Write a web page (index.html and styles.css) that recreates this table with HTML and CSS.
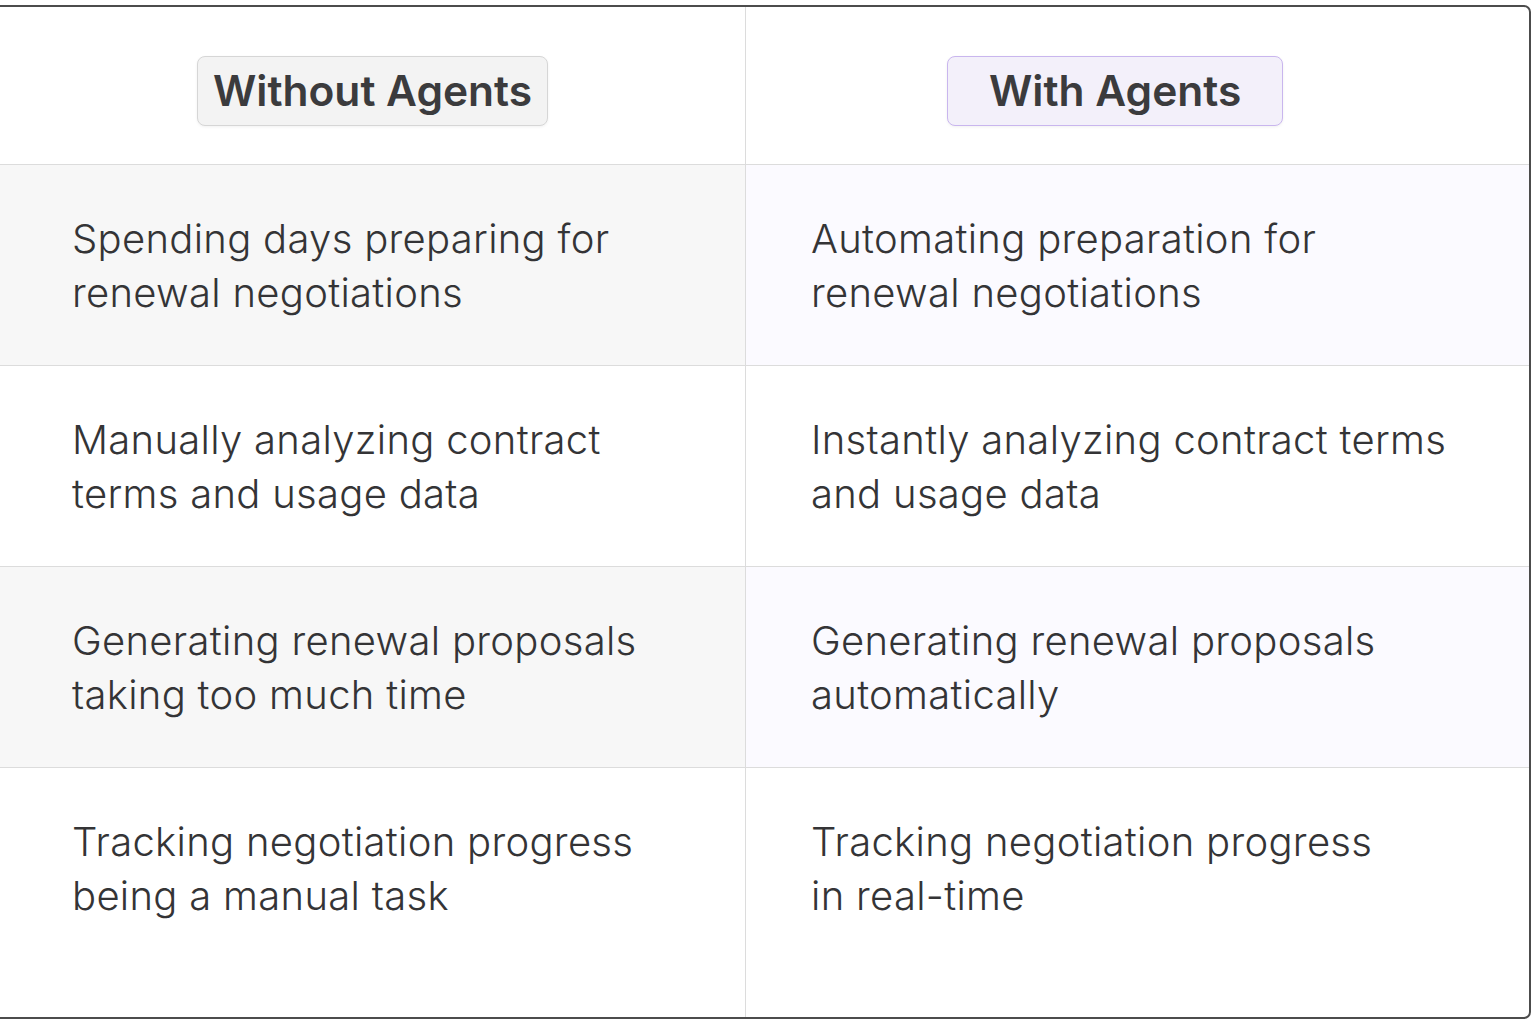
FILE: index.html
```html
<!DOCTYPE html>
<html lang="en">
<head>
<meta charset="utf-8">
<title>Without Agents vs With Agents</title>
<link rel="stylesheet" href="styles.css">
</head>
<body>
<div class="compare">
  <div class="cell head left-col"><span class="badge badge-plain">Without Agents</span></div>
  <div class="cell head right-col"><span class="badge badge-purple">With Agents</span></div>

  <div class="cell row shade-grey left-col"><p>Spending days preparing for<br>renewal negotiations</p></div>
  <div class="cell row shade-lilac right-col"><p>Automating preparation for<br>renewal negotiations</p></div>

  <div class="cell row left-col"><p>Manually analyzing contract<br>terms and usage data</p></div>
  <div class="cell row right-col"><p>Instantly analyzing contract terms<br>and usage data</p></div>

  <div class="cell row shade-grey left-col"><p>Generating renewal proposals<br>taking too much time</p></div>
  <div class="cell row shade-lilac right-col"><p>Generating renewal proposals<br>automatically</p></div>

  <div class="cell row last left-col"><p>Tracking negotiation progress<br>being a manual task</p></div>
  <div class="cell row last right-col"><p>Tracking negotiation progress<br>in real-time</p></div>
</div>
</body>
</html>
```
FILE: styles.css
```css
* { box-sizing: border-box; }
html, body { margin: 0; padding: 0; background: #ffffff; }
body { overflow: hidden; width: 1536px; height: 1024px; }

.compare {
  margin-top: 5px;
  margin-left: -10px;
  width: 1541px;
  display: grid;
  grid-template-columns: 753px 784px;
  grid-template-rows: 158px 201px 201px 201px 249px;
  border: 2px solid #4c4c4c;
  border-radius: 0 7px 7px 0;
  overflow: hidden;
  font-family: Inter, "Noto Sans", sans-serif;
  color: #3a3a3c;
}

.cell { border-bottom: 1px solid #dcdcdc; }
.cell.last { border-bottom: none; }
.right-col { border-left: 1px solid #dcdcdc; }

.head {
  display: flex;
  align-items: flex-start;
  padding-top: 49px;
}
.head.left-col { justify-content: center; padding-left: 8px; }
.head.right-col { justify-content: flex-start; padding-left: 201px; }

.badge {
  display: inline-block;
  font-size: 42.5px;
  font-weight: 600;
  line-height: 67px;
  height: 70px;
  border-radius: 8px;
  color: #3b3b3d;
  box-shadow: 0 1px 3px rgba(0,0,0,0.06);
}
.badge-plain {
  background: #f3f3f3;
  border: 1.5px solid #d6d6d6;
  padding: 0 15px;
}
.badge-purple {
  background: #f3f0fa;
  border: 1.5px solid #c9b6ee;
  padding: 0 41px 0 41px;
}

.row p {
  margin: 0;
  font-size: 40px;
  font-weight: 300;
  line-height: 54px;
  letter-spacing: 0.3px;
  color: #343436;
}
.row.left-col { padding: 47px 0 0 80px; }
.row.right-col { padding: 47px 0 0 65px; }

.shade-grey { background: #f7f7f7; }
.shade-lilac { background: #fbfaff; }
```
